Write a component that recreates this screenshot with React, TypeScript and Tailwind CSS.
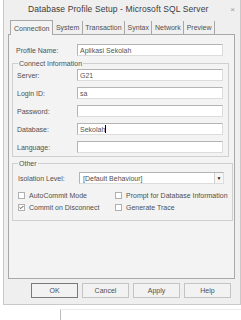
import { Check } from 'lucide-react';

const FIELDS = [
  { label: 'Server:', value: 'G21' },
  { label: 'Login ID:', value: 'sa' },
  { label: 'Password:', value: '' },
  { label: 'Database:', value: 'Sekolah', caret: true },
  { label: 'Language:', value: '' },
];

const TABS = ['Connection', 'System', 'Transaction', 'Syntax', 'Network', 'Preview'];

function TextBox({ value, caret }: { value: string; caret?: boolean }) {
  return (
    <div className="w-[146px] h-[12px] bg-white border border-[#b4b4b4] border-r-[#dcdcdc] border-b-[#dcdcdc] flex items-center pl-[2px] text-[7px] text-[#555]">
      {value}
      {caret && <span className="w-px h-[8px] bg-black" />}
    </div>
  );
}

function CheckBox({ label, checked }: { label: string; checked?: boolean }) {
  return (
    <div className="flex items-center h-[12px] gap-[4px] whitespace-nowrap">
      <div className="w-[7px] h-[7px] shrink-0 bg-white border border-[#b0b0b0] flex items-center justify-center">
        {checked && <Check className="w-[7px] h-[7px] text-[#222]" strokeWidth={4} />}
      </div>
      <span>{label}</span>
    </div>
  );
}

export default function App() {
  return (
    <div className="w-[241px] h-[320px] bg-white overflow-hidden text-[#505050] text-[7px] leading-none" style={{ fontFamily: '"Liberation Sans", Arial, sans-serif' }}>
      <div className="ml-[3px] w-[238px] h-[305px] bg-[#efefef] border-l border-r border-b border-[#c9c9c9] flex flex-col">
        {/* title bar */}
        <div className="h-[19px] flex items-center pl-[24px] pr-[5px]">
          <span className="text-[8.5px] text-[#3c3c3c] tracking-[0.1px]">Database Profile Setup - Microsoft SQL Server</span>
          <span className="ml-auto text-[8px] text-[#9a9a9a]">×</span>
        </div>

        {/* tabs */}
        <div className="h-[15px] flex items-end pl-[6px] whitespace-nowrap">
          {TABS.map((t, i) => (
            <div
              key={t}
              className={
                i === 0
                  ? 'h-[15px] px-[3px] flex items-center border-l border-t border-r border-[#a8a8a8] bg-[#f3f3f3] -mb-px relative'
                  : 'h-[13px] px-[2.5px] flex items-center border-r border-[#a8a8a8]'
              }
            >
              {t}
            </div>
          ))}
        </div>

        {/* panel */}
        <div className="ml-[4px] w-[227px] h-[245px] border border-[#a8a8a8] bg-[#f3f3f3] px-[3px] pt-[9px]">
          <div className="flex items-center h-[12px]">
            <span className="w-[65px] pl-[4px]">Profile Name:</span>
            <TextBox value="Aplikasi Sekolah" />
          </div>

          <fieldset className="mt-[4px] w-[217px] border border-[#cfcfcf] px-[4px] pb-[3px]">
            <legend className="px-[1px] ml-[1px] text-[7px]">Connect Information</legend>
            <div className="flex flex-col gap-[6px] pt-[2px]">
              {FIELDS.map((f) => (
                <div key={f.label} className="flex items-center h-[12px]">
                  <span className="w-[60px]">{f.label}</span>
                  <TextBox value={f.value} caret={f.caret} />
                </div>
              ))}
            </div>
          </fieldset>

          <fieldset className="mt-[3px] w-[217px] border border-[#cfcfcf] px-[4px] pb-[7px]">
            <legend className="px-[1px] ml-[1px] text-[7px]">Other</legend>
            <div className="flex items-center h-[12px] mt-[5px]">
              <span className="w-[62px] pl-[1px]">Isolation Level:</span>
              <div className="w-[145px] h-[12px] bg-white border border-[#b4b4b4] border-r-[#dcdcdc] border-b-[#dcdcdc] flex items-center pl-[3px]">
                <span>[Default Behaviour]</span>
                <div className="ml-auto w-[9px] h-[10px] border-l border-[#d0d0d0] bg-[#f6f6f6] flex items-center justify-center text-[5px] text-[#222]">▼</div>
              </div>
            </div>
            <div className="grid grid-cols-[97px_1fr] pl-[1px] mt-[5px]">
              <CheckBox label="AutoCommit Mode" />
              <CheckBox label="Prompt for Database Information" />
              <CheckBox label="Commit on Disconnect" checked />
              <CheckBox label="Generate Trace" />
            </div>
          </fieldset>
        </div>

        {/* buttons */}
        <div className="flex gap-[4px] pl-[27px] mt-[4px]">
          {['OK', 'Cancel', 'Apply', 'Help'].map((b, i) => (
            <div
              key={b}
              className={
                'w-[47px] h-[15px] flex items-center justify-center bg-[#f2f2f2] border ' +
                (i === 0 ? 'border-[#7a7a7a]' : 'border-[#c4c4c4]')
              }
            >
              {b}
            </div>
          ))}
        </div>
      </div>

      {/* window behind */}
      <div className="flex mt-[4px]">
        <div className="w-[60px]" />
        <div className="flex-1 h-[20px] border-l border-t border-l-[#bdbdbd] border-t-[#ececec]" />
      </div>
    </div>
  );
}
